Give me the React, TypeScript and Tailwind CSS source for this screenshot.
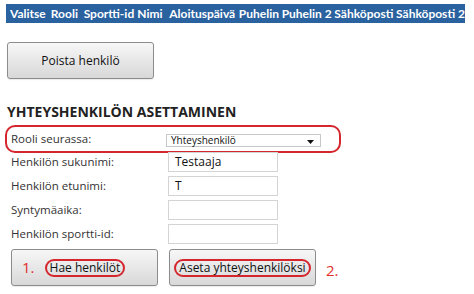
const cols = [
  { label: "Valitse", w: "w-[41px]" },
  { label: "Rooli", w: "w-[33px]" },
  { label: "Sportti-id", w: "w-[54px]" },
  { label: "Nimi", w: "w-[32px]" },
  { label: "Aloituspäivä", w: "w-[70px]" },
  { label: "Puhelin", w: "w-[43px]" },
  { label: "Puhelin 2", w: "w-[53px]" },
  { label: "Sähköposti", w: "w-[62px]" },
  { label: "Sähköposti 2", w: "flex-1" },
];

const fields = [
  { label: "Henkilön sukunimi:", value: "Testaaja" },
  { label: "Henkilön etunimi:", value: "T" },
  { label: "Syntymäaika:", value: "" },
  { label: "Henkilön sportti-id:", value: "" },
];

const btn =
  "h-[37px] w-[147px] rounded-[3px] border border-[#8c8c8c] bg-gradient-to-b from-[#f7f7f7] to-[#d8d8d8] text-[12px] text-[#111] shadow-[0_1px_1px_rgba(0,0,0,0.08)]";

export default function App() {
  return (
    <div className="h-[294px] w-[474px] bg-white pt-[4px] font-['Open_Sans',sans-serif] text-[#333]">
      <div className="ml-[6px] flex h-[19px] w-[459px] items-center bg-[#2a62a0] pl-[4px] font-['Lato',sans-serif] text-[12px] font-bold text-white">
        {cols.map((c) => (
          <span key={c.label} className={`${c.w} whitespace-nowrap`}>
            {c.label}
          </span>
        ))}
      </div>

      <button className={`${btn} ml-[7px] mt-[19px]`}>Poista henkilö</button>

      <h2 className="ml-[7px] mt-[25px] text-[14px] font-bold leading-[16px] text-[#222]">
        YHTEYSHENKILÖN ASETTAMINEN
      </h2>

      <div className="mt-[5px] ml-[5px] flex h-[28px] w-[336px] items-center rounded-[10px] border-2 border-[#d4262c] pl-[4px]">
        <span className="w-[155px] text-[11.5px]">Rooli seurassa:</span>
        <div className="mt-[2px] flex h-[13px] w-[155px] items-center justify-between border border-[#c8c8c8] bg-white pl-[4px] pr-[6px] text-[10px] leading-none text-[#111]">
          <span>Yhteyshenkilö</span>
          <svg width="7" height="4" viewBox="0 0 7 4" className="mt-[4px]">
            <path d="M0 0h7L3.5 4z" fill="#111" />
          </svg>
        </div>
      </div>

      <div className="-mt-[1px] flex flex-col gap-[4px] pl-[11px]">
        {fields.map((f) => (
          <div key={f.label} className="flex h-[20px] items-center">
            <span className="w-[157px] text-[11.5px]">{f.label}</span>
            <div className="flex h-[20px] w-[110px] items-center border border-[#d4d4d4] bg-white pl-[6px] text-[12px] text-[#111]">
              {f.value}
            </div>
          </div>
        ))}
      </div>

      <div className="ml-[11px] mt-[5px] flex items-start">
        <button className={`${btn} flex items-center pl-[10px]`}>
          <span className="mr-[10px] text-[15px] leading-none text-[#e0302c]">1.</span>
          <span className="rounded-full border-2 border-[#d4262c] px-[3px] leading-[14px]">
            Hae henkilöt
          </span>
        </button>
        <button className={`${btn} ml-[11px] flex items-center justify-center`}>
          <span className="rounded-full border-2 border-[#d4262c] px-[3px] leading-[14px]">
            Aseta yhteyshenkilöksi
          </span>
        </button>
        <span className="ml-[10px] mt-[10px] text-[15px] text-[#e0302c]">2.</span>
      </div>
    </div>
  );
}
